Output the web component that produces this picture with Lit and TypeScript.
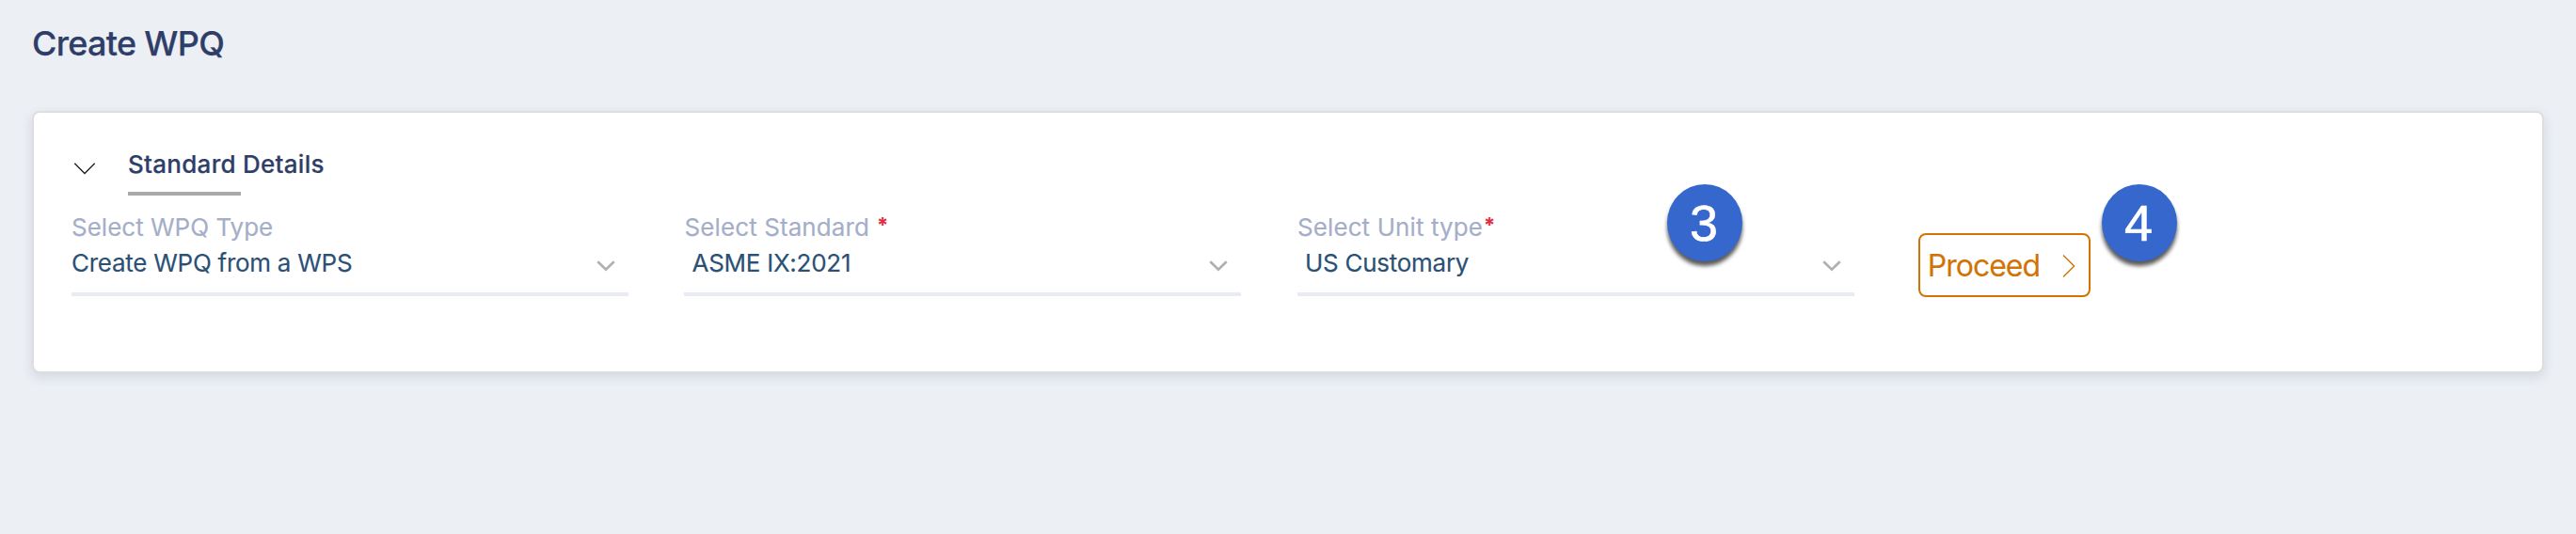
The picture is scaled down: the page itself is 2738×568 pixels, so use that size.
import { LitElement, html, css, nothing } from "lit";
import { customElement, property } from "lit/decorators.js";
import { classMap } from "lit/directives/class-map.js";

@customElement("select-field")
class SelectField extends LitElement {
  @property() label = "";
  @property() value = "";
  @property() mark: "" | "tight" | "spaced" = "";
  @property({ type: Boolean }) inset = false;

  static styles = css`
    :host { display: block; }
    .field { border-bottom: 4px solid #e8ebf3; padding-bottom: 12px; }
    .row { display: flex; align-items: center; height: 38px; font-size: 26px; line-height: 38px; white-space: pre; -webkit-text-stroke: 0.15px currentColor; }
    .label { color: #a5aec9; letter-spacing: 0.1px; }
    .label.plain { letter-spacing: 0; }
    .value { color: #2b5074; justify-content: space-between; letter-spacing: -0.27px; }
    .value.inset { padding-left: 8px; }
    .mark { color: #e02d3f; font-weight: 700; font-size: 22px; line-height: 32px; height: 38px; letter-spacing: 0; -webkit-text-stroke: 0; }
    .mark.spaced { margin-left: 8px; }
    .mark.tight { margin-left: 1px; }
    svg { display: block; margin: 3px 13px 0 0; }
  `;

  render() {
    return html`<div class="field">
      <div class=${classMap({ row: true, label: true, plain: !this.mark })}>${this.label}${this.mark
        ? html`<span class="mark ${this.mark}">*</span>`
        : nothing}</div>
      <div class=${classMap({ row: true, value: true, inset: this.inset })}><span>${this.value}</span><svg width="22" height="14" viewBox="0 0 22 14" fill="none" stroke="#b0b0b0" stroke-width="2.7"><path d="M2.3 3.2 11 11.6 19.7 3.2" /></svg></div>
    </div>`;
  }
}

@customElement("step-badge")
class StepBadge extends LitElement {
  static styles = css`
    :host {
      display: block; box-sizing: border-box; width: 80px; height: 82px; padding-right: 2px;
      border-radius: 50%; background: #3567cd; color: #fff;
      font: 54px/82px "Liberation Sans", Arial, sans-serif; text-align: center;
      -webkit-text-stroke: 0.6px #fff;
      box-shadow: 0 5px 4px rgba(0, 0, 0, 0.65);
    }
  `;
  render() { return html`<slot></slot>`; }
}

@customElement("app-root")
class AppRoot extends LitElement {
  static styles = css`
    :host {
      display: block; box-sizing: border-box; height: 568px; padding: 28px 34px 0;
      background: #ecf0f5; color: #2f3e69; font-family: Inter, sans-serif;
    }
    h1 { margin: 0 0 54px; font-size: 36px; line-height: 36px; font-weight: 500; letter-spacing: -0.7px; -webkit-text-stroke: 0.25px currentColor; }
    .card {
      position: relative; box-sizing: border-box; height: 279px; padding: 35px 40px 0;
      border: 2px solid #dedede; border-radius: 8px; background: #fff;
      box-shadow: 0 4px 12px rgba(70, 70, 100, 0.15);
    }
    .head { display: flex; height: 53px; margin-bottom: 15px; }
    .toggle { display: block; margin: 17px 33px 0 2px; }
    .title { display: flex; flex-direction: column; justify-content: space-between; }
    h2 { margin: 0; font-size: 26px; line-height: 40px; font-weight: 500; letter-spacing: 0.27px; -webkit-text-stroke: 0.2px currentColor; }
    .bar { width: 120px; height: 4px; background: #a9a9a9; }
    .form { display: flex; align-items: flex-start; }
    .fields { display: grid; grid-template-columns: repeat(3, 591.8px); gap: 59.7px; }
    button {
      display: flex; align-items: center; justify-content: space-between; box-sizing: border-box;
      width: 183px; height: 68px; margin: 25px 0 0 68px; padding: 1px 13px 0 8px;
      border: 2px solid #d27304; border-radius: 8px; background: #fff; color: #d27304;
      font: 400 32px/64px Inter, sans-serif; letter-spacing: -1px; -webkit-text-stroke: 0.1px currentColor;
    }
    step-badge { position: absolute; top: 76px; }
    .three { left: 1736px; }
    .four { left: 2198px; }
  `;

  render() {
    return html`
      <h1>Create WPQ</h1>
      <section class="card">
        <div class="head">
          <svg class="toggle" width="25" height="16" viewBox="0 0 25 16" fill="none" stroke="#222" stroke-width="1.4"><path d="M1.3 1.8 12 12.4 22.7 1.8" /></svg>
          <div class="title"><h2>Standard Details</h2><div class="bar"></div></div>
        </div>
        <div class="form">
          <div class="fields">
            <select-field label="Select WPQ Type" value="Create WPQ from a WPS"></select-field>
            <select-field label="Select Standard" value="ASME IX:2021" mark="spaced" inset></select-field>
            <select-field label="Select Unit type" value="US Customary" mark="tight" inset></select-field>
          </div>
          <button>Proceed<svg width="16" height="26" viewBox="0 0 16 26" fill="none" stroke="currentColor" stroke-width="1.4"><path d="M2 1.6 13.6 13 2 24.4" /></svg></button>
        </div>
        <step-badge class="three">3</step-badge>
        <step-badge class="four">4</step-badge>
      </section>
    `;
  }
}
